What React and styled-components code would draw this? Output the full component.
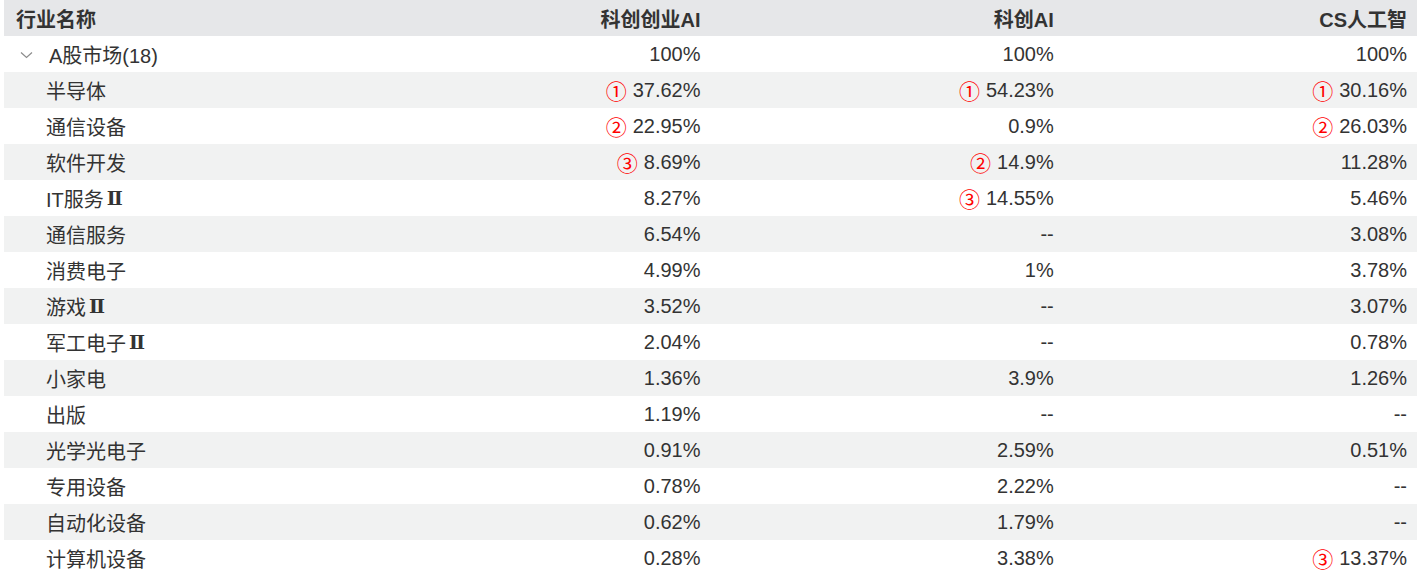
import styled, { createGlobalStyle } from "styled-components";

const GlobalStyle = createGlobalStyle`
    html, body {
        margin: 0;
        padding: 0;
        background: #ffffff;
    }
    body {
        font-family: "Liberation Sans", Arial, "Noto Sans CJK SC", sans-serif;
        color: #333333;
    }
`;

const Wrapper = styled.div`
    padding: 0 2px 0 4px;
`;

const Row = styled.div`
    display: grid;
    grid-template-columns: repeat(4, 1fr);
    height: 36px;
    align-items: center;
    background-color: ${(p) => (p.$striped ? "#f1f2f2" : "#ffffff")};
    font-size: 20px;
    color: #333333;
`;

const HeaderRow = styled(Row)`
    background-color: #e6e7e9;
    font-weight: 700;
`;

const NameCell = styled.div`
    display: flex;
    align-items: center;
    padding-left: ${(p) => (p.$indent ? "42px" : "12px")};
    white-space: nowrap;
`;

const ValueCell = styled.div`
    display: flex;
    justify-content: flex-end;
    align-items: center;
    padding-right: 10px;
    white-space: nowrap;
`;

const Chevron = styled.svg`
    width: 13px;
    height: 8px;
    margin: 2px 16px 0 4px;
    flex-shrink: 0;
`;

const Numeral = styled.span`
    font-family: "DejaVu Serif", serif;
    font-weight: 700;
    font-size: 19px;
    margin-left: 3px;
`;

const Rank = styled.span`
    font-family: "Noto Sans CJK SC", sans-serif;
    color: #ff0000;
    font-size: 21px;
    margin-right: 6px;
    line-height: 1;
`;

const marks = { 1: "①", 2: "②", 3: "③" };

const rows = [
    ["半导体", [1, "37.62%"], [1, "54.23%"], [1, "30.16%"]],
    ["通信设备", [2, "22.95%"], [0, "0.9%"], [2, "26.03%"]],
    ["软件开发", [3, "8.69%"], [2, "14.9%"], [0, "11.28%"]],
    ["IT服务Ⅱ", [0, "8.27%"], [3, "14.55%"], [0, "5.46%"]],
    ["通信服务", [0, "6.54%"], [0, "--"], [0, "3.08%"]],
    ["消费电子", [0, "4.99%"], [0, "1%"], [0, "3.78%"]],
    ["游戏Ⅱ", [0, "3.52%"], [0, "--"], [0, "3.07%"]],
    ["军工电子Ⅱ", [0, "2.04%"], [0, "--"], [0, "0.78%"]],
    ["小家电", [0, "1.36%"], [0, "3.9%"], [0, "1.26%"]],
    ["出版", [0, "1.19%"], [0, "--"], [0, "--"]],
    ["光学光电子", [0, "0.91%"], [0, "2.59%"], [0, "0.51%"]],
    ["专用设备", [0, "0.78%"], [0, "2.22%"], [0, "--"]],
    ["自动化设备", [0, "0.62%"], [0, "1.79%"], [0, "--"]],
    ["计算机设备", [0, "0.28%"], [0, "3.38%"], [3, "13.37%"]],
];

const Name = ({ text }) => {
    const parts = text.split("Ⅱ");
    return (
        <NameCell $indent>
            {parts[0]}
            {parts.length > 1 ? <Numeral>Ⅱ</Numeral> : null}
        </NameCell>
    );
};

const Value = ({ rank, text }) => (
    <ValueCell>
        {rank ? <Rank>{marks[rank]}</Rank> : null}
        {text}
    </ValueCell>
);

const App = () => {
    return (
        <Wrapper>
            <GlobalStyle />
            <HeaderRow>
                <NameCell>行业名称</NameCell>
                <ValueCell>科创创业AI</ValueCell>
                <ValueCell>科创AI</ValueCell>
                <ValueCell>CS人工智</ValueCell>
            </HeaderRow>
            <Row>
                <NameCell>
                    <Chevron viewBox="0 0 13 8">
                        <path d="M1 1.5 L6.5 6.5 L12 1.5" fill="none" stroke="#8c8c8c" strokeWidth="1.2" />
                    </Chevron>
                    A股市场(18)
                </NameCell>
                <ValueCell>100%</ValueCell>
                <ValueCell>100%</ValueCell>
                <ValueCell>100%</ValueCell>
            </Row>
            {rows.map(([name, a, b, c], i) => (
                <Row key={name} $striped={i % 2 === 0}>
                    <Name text={name} />
                    <Value rank={a[0]} text={a[1]} />
                    <Value rank={b[0]} text={b[1]} />
                    <Value rank={c[0]} text={c[1]} />
                </Row>
            ))}
        </Wrapper>
    );
};

export default App;
